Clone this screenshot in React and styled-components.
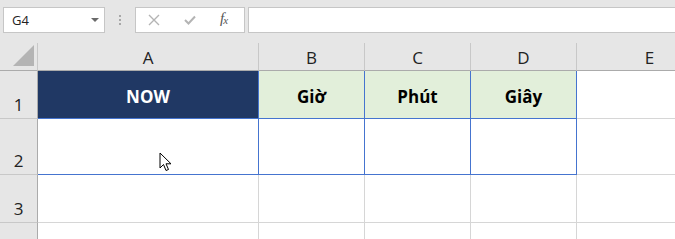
import React from 'react';
import styled, { createGlobalStyle } from 'styled-components';

const GlobalStyle = createGlobalStyle`
  html, body {
    margin: 0;
    padding: 0;
    background: #e6e6e6;
    overflow: hidden;
  }
  * { box-sizing: border-box; }
`;

const Page = styled.div`
  width: 675px;
  height: 239px;
  background: #e6e6e6;
  font-family: "Open Sans", "Liberation Sans", sans-serif;
  position: relative;
  overflow: hidden;
`;

const FormulaBar = styled.div`
  display: flex;
  align-items: center;
  height: 43px;
  padding: 7px 0 11px 3px;
`;

const NameBox = styled.div`
  width: 102px;
  height: 26px;
  background: #fff;
  border: 1px solid #c6c6c6;
  display: flex;
  align-items: center;
  justify-content: space-between;
  padding: 0 5px 0 8px;
  font-size: 13px;
  color: #222;
`;

const Caret = styled.span`
  width: 0;
  height: 0;
  border-left: 4px solid transparent;
  border-right: 4px solid transparent;
  border-top: 4px solid #6a6a6a;
`;

const Grip = styled.div`
  width: 30px;
  display: flex;
  flex-direction: column;
  align-items: center;
  gap: 2px;
  span {
    width: 2px;
    height: 2px;
    background: #a8a8a8;
  }
`;

const ButtonBox = styled.div`
  width: 110px;
  height: 26px;
  background: #fff;
  border: 1px solid #c6c6c6;
  display: flex;
  align-items: center;
  gap: 24px;
  padding: 0 0 0 12px;
`;

const Fx = styled.span`
  font-family: "Liberation Serif", serif;
  font-style: italic;
  font-size: 15px;
  color: #555;
  letter-spacing: -1px;
  margin-top: -2px;
  sub { font-size: 11px; vertical-align: -1px; }
`;

const FormulaInput = styled.div`
  flex: 1;
  height: 26px;
  margin-left: 3px;
  background: #fff;
  border: 1px solid #c6c6c6;
  border-right: none;
`;

const Grid = styled.div`
  display: grid;
  grid-template-columns: 38px 221px 106px 106px 106px 146px;
  grid-template-rows: 28px 48px 56px 48px 30px;
  background: #fff;
`;

const Corner = styled.div`
  background: #e6e6e6;
  border-right: 1px solid #c8c8c8;
  border-bottom: 1px solid #ababab;
  display: flex;
  align-items: flex-end;
  justify-content: flex-end;
  padding: 0 3px 4px 0;
`;

const ColHead = styled.div`
  background: #e6e6e6;
  border-right: 1px solid #c8c8c8;
  border-bottom: 1px solid #ababab;
  display: flex;
  align-items: center;
  justify-content: center;
  font-size: 17px;
  color: #222;
  padding-top: 1px;
`;

const RowHead = styled.div`
  background: #e6e6e6;
  border-right: 1px solid #ababab;
  border-bottom: 1px solid #c8c8c8;
  display: flex;
  align-items: flex-end;
  justify-content: center;
  font-size: 17px;
  color: #222;
  padding-bottom: 2px;
`;

const Cell = styled.div`
  background: ${(p) => p.$bg || '#fff'};
  color: ${(p) => p.$color || '#000'};
  border-right: 1px solid ${(p) => (p.$boxed ? '#4574cf' : '#d6d6d6')};
  border-bottom: 1px solid ${(p) => (p.$boxed ? '#4574cf' : '#d6d6d6')};
  display: flex;
  align-items: center;
  justify-content: center;
  font-size: 17px;
  font-weight: 700;
  padding-top: 4px;
`;

const Cursor = styled.svg`
  position: absolute;
  left: 159px;
  top: 152px;
`;

const cols = ['A', 'B', 'C', 'D', 'E'];
const rows = [
  { n: '1', cells: [
    { text: 'NOW', bg: '#203864', color: '#fff', boxed: true },
    { text: 'Giờ', bg: '#e2efda', boxed: true },
    { text: 'Phút', bg: '#e2efda', boxed: true },
    { text: 'Giây', bg: '#e2efda', boxed: true },
    { text: '' },
  ] },
  { n: '2', cells: [{ boxed: true }, { boxed: true }, { boxed: true }, { boxed: true }, {}] },
  { n: '3', cells: [{}, {}, {}, {}, {}] },
  { n: '', cells: [{}, {}, {}, {}, {}] },
];

export default function App() {
  return (
    <Page>
      <GlobalStyle />
      <FormulaBar>
        <NameBox>
          G4
          <Caret />
        </NameBox>
        <Grip>
          <span />
          <span />
          <span />
        </Grip>
        <ButtonBox>
          <svg width="12" height="12" viewBox="0 0 12 12">
            <path d="M1 1 L11 11 M11 1 L1 11" stroke="#b4b4b4" strokeWidth="1.4" fill="none" />
          </svg>
          <svg width="12" height="10" viewBox="0 0 12 10">
            <path d="M1 5 L4.5 8.5 L11 1.5" stroke="#b4b4b4" strokeWidth="2" fill="none" />
          </svg>
          <Fx>f<sub>x</sub></Fx>
        </ButtonBox>
        <FormulaInput />
      </FormulaBar>
      <Grid>
        <Corner>
          <svg width="21" height="21" viewBox="0 0 21 21">
            <polygon points="21,0 21,21 0,21" fill="#b4b4b4" />
          </svg>
        </Corner>
        {cols.map((c) => (
          <ColHead key={c}>{c}</ColHead>
        ))}
        {rows.map((r, i) => (
          <React.Fragment key={i}>
            <RowHead>{r.n}</RowHead>
            {r.cells.map((cell, j) => (
              <Cell key={j} $bg={cell.bg} $color={cell.color} $boxed={cell.boxed}>
                {cell.text}
              </Cell>
            ))}
          </React.Fragment>
        ))}
      </Grid>
      <Cursor width="14" height="21" viewBox="0 0 14 21">
        <path
          d="M1 1 L1 16 L4.5 12.5 L7 18.5 L9.5 17.5 L7 11.8 L12 11.8 Z"
          fill="#fff"
          stroke="#000"
          strokeWidth="1"
          strokeLinejoin="round"
        />
      </Cursor>
    </Page>
  );
}
